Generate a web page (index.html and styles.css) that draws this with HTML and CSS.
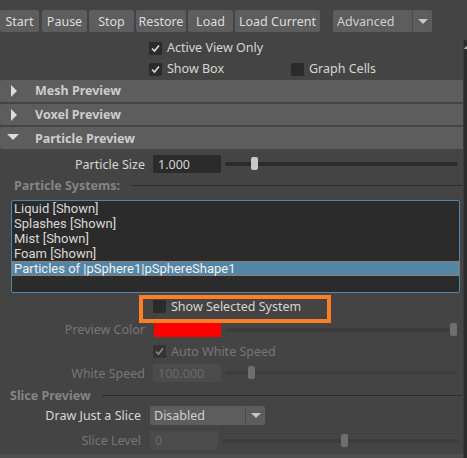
FILE: index.html
```html
<!DOCTYPE html>
<html>
<head>
<meta charset="utf-8">
<link rel="stylesheet" href="styles.css">
</head>
<body>
<div class="toolbar">
  <div class="btn b-start">Start</div>
  <div class="btn b-pause">Pause</div>
  <div class="btn b-stop">Stop</div>
  <div class="btn b-restore">Restore</div>
  <div class="btn b-load">Load</div>
  <div class="btn b-loadcur">Load Current</div>
  <div class="dropdown adv"><span class="dd-text">Advanced</span><span class="dd-arrow"><i class="tri-down"></i></span></div>
</div>
<div class="main">
  <div class="panel">
    <div class="checks">
      <div class="crow">
        <div class="cb"><span class="box"><svg viewBox="0 0 13 13" width="13" height="13"><polyline points="3,6.5 5.5,9 10,3.5" fill="none" stroke="#dcdcdc" stroke-width="1.6"/></svg></span><span>Active View Only</span></div>
      </div>
      <div class="crow">
        <div class="cb first"><span class="box"><svg viewBox="0 0 13 13" width="13" height="13"><polyline points="3,6.5 5.5,9 10,3.5" fill="none" stroke="#dcdcdc" stroke-width="1.6"/></svg></span><span>Show Box</span></div>
        <div class="cb"><span class="box"></span><span>Graph Cells</span></div>
      </div>
    </div>

    <div class="fheader"><i class="tri-right"></i><span>Mesh Preview</span></div>
    <div class="fheader"><i class="tri-right"></i><span>Voxel Preview</span></div>
    <div class="fheader"><i class="tri-open"></i><span>Particle Preview</span></div>

    <div class="prow r-size">
      <span class="lbl">Particle Size</span>
      <div class="field">1.000</div>
      <div class="slider"><div class="track"></div><div class="thumb" style="left:26px"></div></div>
    </div>

    <div class="group g-systems"><span class="gtitle">Particle Systems:</span><span class="gline"></span></div>

    <div class="list">
      <div class="item">Liquid [Shown]</div>
      <div class="item">Splashes [Shown]</div>
      <div class="item">Mist [Shown]</div>
      <div class="item">Foam [Shown]</div>
      <div class="item sel">Particles of |pSphere1|pSphereShape1</div>
    </div>

    <div class="srow r-showsel">
      <div class="cb"><span class="box"></span><span>Show Selected System</span></div>
      <div class="highlight"></div>
    </div>

    <div class="prow r-color dis">
      <span class="lbl">Preview Color</span>
      <div class="swatch"></div>
      <div class="slider"><div class="track"></div><div class="thumb" style="left:225px"></div></div>
    </div>

    <div class="srow r-auto dis">
      <div class="cb"><span class="box"><svg viewBox="0 0 13 13" width="13" height="13"><polyline points="3,6.5 5.5,9 10,3.5" fill="none" stroke="#8a8a8a" stroke-width="1.6"/></svg></span><span>Auto White Speed</span></div>
    </div>

    <div class="prow r-white dis">
      <span class="lbl">White Speed</span>
      <div class="field">100.000</div>
      <div class="slider"><div class="track"></div><div class="thumb" style="left:23px"></div></div>
    </div>

    <div class="group g-slice"><span class="gtitle">Slice Preview</span><span class="gline"></span></div>

    <div class="srow2 r-draw">
      <span class="lbl">Draw Just a Slice</span>
      <div class="dropdown dd-slice"><span class="dd-text">Disabled</span><span class="dd-arrow"><i class="tri-down"></i></span></div>
    </div>

    <div class="srow2 r-level dis">
      <span class="lbl">Slice Level</span>
      <div class="field f-level">0</div>
      <div class="slider"><div class="track"></div><div class="thumb" style="left:119px"></div></div>
    </div>
    <div class="bottom"></div>
  </div>
  <div class="scrollbar"><i class="sb-up"></i></div>
</div>
</body>
</html>
```
FILE: styles.css
```css
* { box-sizing: border-box; }
html, body { margin: 0; padding: 0; }
body {
  width: 467px;
  height: 458px;
  overflow: hidden;
  background: #444444;
  font-family: "Noto Sans", "Open Sans", sans-serif;
  font-size: 12.5px;
  color: #d6d6d6;
}

/* toolbar */
.toolbar {
  height: 40px;
  padding-top: 10px;
  display: flex;
  align-items: flex-start;
  background: #444;
}
.btn {
  height: 22px;
  background: #5d5d5d;
  border-radius: 2px;
  display: flex;
  align-items: center;
  justify-content: center;
  color: #dcdcdc;
  margin-right: 2px;
  white-space: nowrap;
}
.b-start { width: 39px; margin-right: 3px; }
.b-pause { width: 45px; }
.b-stop { width: 45px; }
.b-restore { width: 50px; }
.b-load { width: 45px; margin-right: 2px; }
.b-loadcur { width: 85px; margin-right: 13px; }

.dropdown {
  display: flex;
  background: #5d5d5d;
  border-radius: 2px;
  color: #cfcfcf;
}
.dd-text { flex: 1; padding-left: 4px; display: flex; align-items: center; }
.dd-arrow {
  width: 20px;
  border-left: 1px solid #4a4a4a;
  display: flex; align-items: center; justify-content: center;
}
.tri-down {
  width: 0; height: 0;
  border-left: 5px solid transparent;
  border-right: 5px solid transparent;
  border-top: 5px solid #c8c8c8;
}
.adv { width: 99px; height: 22px; }

/* main */
.main { display: flex; height: 418px; }
.panel { flex: 1; display: flex; flex-direction: column; }
.scrollbar {
  width: 4px;
  background: #2c2c2c;
  border-left: 1px solid #3a3a3a;
  position: relative;
}
.sb-up {
  position: absolute; top: 6px; left: 0;
  width: 0; height: 0;
  border-left: 2px solid transparent;
  border-right: 2px solid transparent;
  border-bottom: 3px solid #bbb;
}

/* checkboxes */
.checks { padding: 1px 0 4px 149px; display: flex; flex-direction: column; gap: 7px; }
.crow { height: 14px; display: flex; align-items: center; }
.cb { display: flex; align-items: center; gap: 5px; white-space: nowrap; line-height: 14px; }
.cb.first { width: 142px; }
.box {
  width: 13px; height: 13px;
  background: #2b2b2b;
  border-radius: 1px;
  display: block;
  flex: none;
}
.box svg { display: block; }

/* frame headers */
.fheader {
  height: 22px;
  margin-bottom: 2px;
  background: #5d5d5d;
  border-radius: 2px 0 0 2px;
  display: flex;
  align-items: center;
  font-weight: bold;
  font-size: 12.5px;
  color: #cdcdcd;
  position: relative;
}
.fheader span { margin-left: 35px; }
.tri-right {
  position: absolute; left: 11px; top: 5px;
  width: 0; height: 0;
  border-top: 6px solid transparent;
  border-bottom: 6px solid transparent;
  border-left: 6px solid #dcdcdc;
}
.tri-open {
  position: absolute; left: 7px; top: 7px;
  width: 0; height: 0;
  border-left: 6px solid transparent;
  border-right: 6px solid transparent;
  border-top: 6px solid #dcdcdc;
}

/* particle rows */
.prow {
  display: flex;
  align-items: center;
}
.prow .lbl { width: 145px; text-align: right; flex: none; }
.field {
  background: #2b2b2b;
  height: 18px;
  display: flex;
  align-items: center;
  padding-left: 5px;
  color: #d6d6d6;
  border-radius: 1px;
  flex: none;
}
.prow .field { width: 68px; margin-left: 8px; }
.slider { flex: 1; position: relative; height: 14px; margin-left: 4px; margin-right: 5px; }
.track {
  position: absolute; left: 0; right: 0; top: 5px; height: 4px;
  background: #2b2b2b; border-radius: 2px;
}
.thumb {
  position: absolute; top: 0; width: 7px; height: 13px;
  background: #c8c8c8; border-radius: 2px;
}
.r-size { margin-top: 4px; height: 18px; }

.dis { color: #767676; }
.dis .field { background: #4b4b4b; color: #6a6a6a; }
.dis .track { background: #3d3d3d; }
.dis .thumb { background: #6e6e6e; }
.dis .box { background: #333; }

/* group labels */
.group { display: flex; align-items: center; height: 16px; }
.gtitle { font-weight: bold; color: #858585; font-size: 12.5px; white-space: nowrap; }
.gline { flex: 1; height: 1px; background: #2b2b2b; margin-right: 1px; }
.g-systems { margin-top: 4px; padding-left: 14px; }
.g-systems .gline { margin-left: 11px; }
.g-slice { margin-top: 5px; padding-left: 10px; }
.g-slice .gline { margin-left: 11px; }

/* list */
.list {
  margin: 7px 3px 0 11px;
  height: 94px;
  background: #2b2b2b;
  border: 1px solid #5285a6;
  border-radius: 2px;
  padding-top: 0px;
  font-family: Roboto, "Noto Sans", sans-serif;
  font-size: 13px;
}
.item { height: 15px; line-height: 15px; padding-left: 2px; color: #d8d8d8; white-space: nowrap; overflow: hidden; }
.item.sel { background: #5285a6; color: #f0f0f0; outline: 1px dotted #c8783c; outline-offset: -1px; }

/* simple rows */
.srow { display: flex; align-items: center; height: 13px; padding-left: 153px; position: relative; }
.r-showsel { margin-top: 7px; }
.highlight {
  position: absolute;
  left: 139px; top: -5px;
  width: 192px; height: 28px;
  border: 4px solid #ff7f27;
}
.r-color { margin-top: 9px; height: 15px; }
.swatch { width: 67px; height: 15px; background: #ff0000; margin-left: 9px; flex: none; }
.r-color .slider { margin-left: 4px; }
.r-auto { margin-top: 8px; }
.r-white { margin-top: 6px; height: 18px; }

.srow2 { display: flex; align-items: center; height: 19px; }
.srow2 .lbl { width: 141px; text-align: right; flex: none; }
.r-draw { margin-top: 3px; }
.dd-slice { width: 115px; height: 19px; margin-left: 9px; }
.r-level { margin-top: 6px; }
.f-level { width: 68px; height: 19px; margin-left: 9px; }
.r-level .slider { margin-left: 4px; margin-right: 3px; }

.bottom { margin-top: 4px; height: 4px; background: #4f4f4f; }
```
